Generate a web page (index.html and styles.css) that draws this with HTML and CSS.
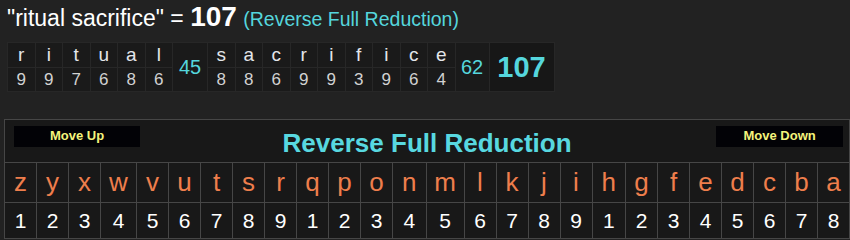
FILE: index.html
```html
<!DOCTYPE html>
<html>
<head>
<meta charset="utf-8">
<link rel="stylesheet" href="styles.css">
</head>
<body>
<div class="heading">"ritual sacrifice" = <span class="num">107</span> <span class="cipher">(Reverse Full Reduction)</span></div>
<table class="breakdown">
  <tr>
    <td class="bl">r</td><td class="bl">i</td><td class="bl">t</td><td class="bl">u</td><td class="bl">a</td><td class="bl">l</td>
    <td rowspan="2" class="bsum bs45">45</td>
    <td class="bl">s</td><td class="bl">a</td><td class="bl">c</td><td class="bl">r</td><td class="bl">i</td><td class="bl">f</td><td class="bl">i</td><td class="bl">c</td><td class="bl">e</td>
    <td rowspan="2" class="bsum bs62">62</td>
    <td rowspan="2" class="btotal">107</td>
  </tr>
  <tr>
    <td class="bv">9</td><td class="bv">9</td><td class="bv">7</td><td class="bv">6</td><td class="bv">8</td><td class="bv">6</td>
    <td class="bv">8</td><td class="bv">8</td><td class="bv">6</td><td class="bv">9</td><td class="bv">9</td><td class="bv">3</td><td class="bv">9</td><td class="bv">6</td><td class="bv">4</td>
  </tr>
</table>
<table class="cipher-table">
  <colgroup>
    <col><col><col><col class="cw"><col><col><col><col><col><col><col><col><col class="ch"><col class="cm"><col><col><col><col><col class="ch"><col><col><col><col><col><col><col>
  </colgroup>
  <tr class="head">
    <td colspan="26">
      <div class="head-bar">
        <div class="btn-wrap left"><span class="btn">Move Up</span></div>
        <div class="title">Reverse Full Reduction</div>
        <div class="btn-wrap right"><span class="btn">Move Down</span></div>
      </div>
    </td>
  </tr>
  <tr class="letters">
    <td>z</td><td>y</td><td>x</td><td>w</td><td>v</td><td>u</td><td>t</td><td>s</td><td>r</td><td>q</td><td>p</td><td>o</td><td>n</td><td>m</td><td>l</td><td>k</td><td>j</td><td>i</td><td>h</td><td>g</td><td>f</td><td>e</td><td>d</td><td>c</td><td>b</td><td>a</td>
  </tr>
  <tr class="numbers">
    <td>1</td><td>2</td><td>3</td><td>4</td><td>5</td><td>6</td><td>7</td><td>8</td><td>9</td><td>1</td><td>2</td><td>3</td><td>4</td><td>5</td><td>6</td><td>7</td><td>8</td><td>9</td><td>1</td><td>2</td><td>3</td><td>4</td><td>5</td><td>6</td><td>7</td><td>8</td>
  </tr>
</table>
</body>
</html>
```
FILE: styles.css
```css
html, body {
  margin: 0;
  padding: 0;
  background: #222222;
  font-family: "Liberation Sans", Arial, sans-serif;
  overflow: hidden;
}

.heading {
  height: 42px;
  box-sizing: border-box;
  padding: 2px 0 0 7px;
  font-size: 23px;
  line-height: 30px;
  color: #ffffff;
  white-space: nowrap;
}

.heading .num {
  font-size: 28px;
  font-weight: bold;
}

.heading .cipher {
  font-size: 19.5px;
  color: #55d6dd;
}

table.breakdown {
  margin-left: 7px;
  border-collapse: collapse;
  background: #1a1a1a;
  font-size: 17px;
}

table.breakdown td {
  border: 1px solid #272727;
  padding: 0;
  text-align: center;
  width: 26.5px;
}

table.breakdown td.bl {
  height: 24px;
  font-size: 19px;
  color: #e4e6ea;
  line-height: 20px;
}

table.breakdown td.bv {
  height: 23px;
  font-size: 17px;
  color: #d2d2d2;
  line-height: 20px;
}

table.breakdown td.bsum {
  font-size: 20px;
  color: #55d6dd;
}

table.breakdown td.bs45 {
  width: 34px;
}

table.breakdown td.bs62 {
  width: 33px;
}

table.breakdown td.btotal {
  width: 64px;
  font-size: 29px;
  font-weight: bold;
  color: #55d6dd;
  background: #171717;
}

.cipher-table {
  margin: 27px 0 0 4px;
  width: 845px;
  border-collapse: collapse;
  table-layout: fixed;
  background: #181818;
}

.cipher-table col {
  width: 32px;
}

.cipher-table col.cw {
  width: 36px;
}

.cipher-table col.cm {
  width: 38px;
}

.cipher-table col.ch {
  width: 33.5px;
}

.cipher-table td {
  border: 1px solid #464646;
  padding: 0;
  text-align: center;
}

.head td {
  height: 42px;
}

.head-bar {
  display: grid;
  grid-template-columns: 1fr auto 1fr;
  align-items: start;
  height: 42px;
}

.btn-wrap {
  display: flex;
  padding-top: 6px;
}

.btn-wrap.left {
  padding-left: 9px;
  justify-content: flex-start;
}

.btn-wrap.right {
  padding-right: 6px;
  justify-content: flex-end;
}

.btn {
  display: block;
  background: #020206;
  color: #f4f47c;
  font-size: 13px;
  font-weight: bold;
  height: 21px;
  line-height: 20px;
  width: 126px;
  text-align: center;
}

.btn-wrap.right .btn {
  width: 127px;
}

.title {
  font-size: 26px;
  font-weight: bold;
  color: #58d8e0;
  line-height: 30px;
  padding-top: 8px;
}

.letters td {
  height: 39px;
  font-size: 26px;
  color: #ee7e4c;
}

.numbers td {
  height: 35px;
  font-size: 21px;
  color: #ffffff;
}
```
